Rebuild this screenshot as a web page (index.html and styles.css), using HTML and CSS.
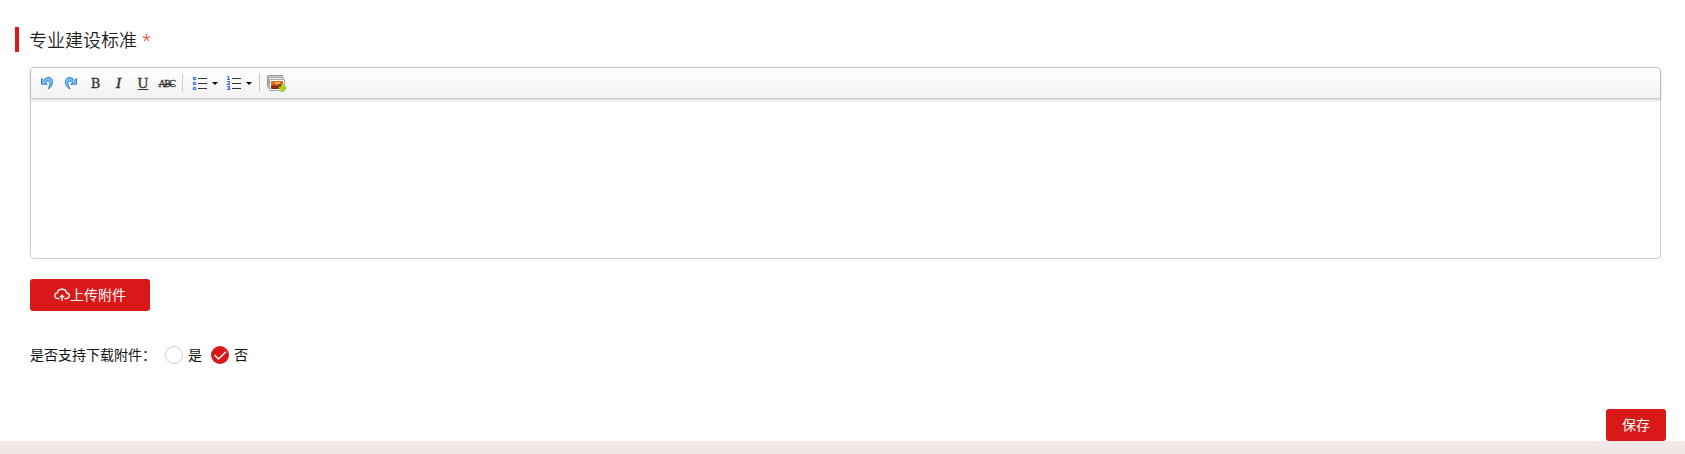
FILE: index.html
```html
<!DOCTYPE html>
<html lang="zh-CN">

<head>
  <meta charset="UTF-8" />
  <meta name="viewport" content="width=device-width, initial-scale=1.0" />
  <title>专业建设标准</title>
  <link rel="stylesheet" href="styles.css">
</head>

<body>
  <main class="panel">
    <!-- Section title -->
    <h2 class="title">专业建设标准<span class="required">*</span></h2>

    <!-- Rich text editor -->
    <div class="editor">
      <div class="toolbar">
        <span class="tool">
          <svg width="14" height="14" viewBox="0 0 14 14">
            <path d="M1.500 2.500v5.700h5.700L5.300 6.200C8 4 10.200 5 10 7.800 9.800 9.800 9 11.300 8 13c3-1.500 4.800-4.500 4.500-7.700C12.100 1 7.500 0 3.400 4.300z" fill="#7fbdf4" stroke="#2a7fd8" />
          </svg>
        </span>
        <span class="tool">
          <svg width="14" height="14" viewBox="0 0 14 14">
            <path d="M12.500 2.500v5.700H6.800l1.900-2C6 4 3.800 5 4 7.800c.2 2 1 3.500 2 5.200C3 11.500 1.200 8.500 1.500 5.300 1.900 1 6.500 0 10.600 4.300z" fill="#7fbdf4" stroke="#2a7fd8" />
          </svg>
        </span>
        <span class="tool bold">B</span>
        <span class="tool italic">I</span>
        <span class="tool underline">U</span>
        <span class="tool strike">ABC</span>
        <span class="separator"></span>
        <span class="tool list">
          <svg width="16" height="16" viewBox="0 0 16 16" fill="none">
            <g stroke="#3d72e8" stroke-width="1.200">
              <circle cx="2.500" cy="3.500" r="1.200" />
              <circle cx="2.500" cy="8.500" r="1.200" />
              <circle cx="2.500" cy="13.500" r="1.200" />
            </g>
            <path d="M6 3.500h9M6 8.500h9M6 13.500h9" stroke="#333" />
          </svg>
          <i class="caret"></i>
        </span>
        <span class="tool list">
          <svg width="16" height="16" viewBox="0 0 16 16" fill="none">
            <path d="M1.200 1.500h1.300v3M1 4.500h3M1 6.500h2.500v1.300L1.500 9.500H4M1 11.500h2.500v3H1M1.500 13h2" stroke="#3d72e8" stroke-width="1.200" />
            <path d="M6 3.500h9M6 8.500h9M6 13.500h9" stroke="#333" />
          </svg>
          <i class="caret"></i>
        </span>
        <span class="separator picture-separator"></span>
        <span class="tool picture">
          <svg width="20" height="18" viewBox="0 0 20 18">
            <path d="M.5 1.500h15v11H.5z" fill="#ccc" stroke="#999" />
            <path d="M1.500 3.500h15v11h-15z" fill="#eee" stroke="#aaa" />
            <path d="M2.500 5.500h15v11h-15z" fill="#fff" stroke="#aaa" />
            <path d="M4 7h12v8H4z" fill="#e06a18" />
            <path d="M4 12l3-1 3 1 3-2 3 1v4H4z" fill="#8c2c0a" />
            <path d="M8 8h5v2H8z" fill="#f9b040" />
            <path d="M14.300 10.500h2.400v2.300H19v2.400h-2.300v2.300h-2.400v-2.300H12v-2.400h2.300z" fill="#a4d818" stroke="#8cc414" stroke-width=".5" />
          </svg>
        </span>
      </div>
      <div class="content" contenteditable="true"></div>
    </div>

    <!-- Attachment upload -->
    <button class="btn upload" type="button">
      <svg width="16" height="16" viewBox="0 0 16 16" fill="none" stroke="#fff" stroke-width="1.300">
        <path d="M5.500 11.600H4C-.2 11.200-.2 6.400 3.300 5.900 4 1.300 11.500.8 12.600 5.900c3.700.5 3.700 5.300-.6 5.700h-1.500" />
        <path d="M8 14V8.500M5.800 10.400L8 8.200l2.200 2.200" />
      </svg>
      <span>上传附件</span>
    </button>

    <!-- Download option -->
    <div class="option-row">
      <span class="label">是否支持下载附件：</span>
      <span class="radio"></span>
      <span class="radio-text">是</span>
      <span class="radio checked">
        <svg width="18" height="18" viewBox="0 0 18 18" fill="none" stroke="#fff" stroke-width="1.500">
          <path d="M3.500 9l4 4L15 5.800" />
        </svg>
      </span>
      <span class="radio-text">否</span>
    </div>

    <div class="actions">
      <button class="btn save" type="button"><span>保存</span></button>
    </div>
  </main>
</body>

</html>
```
FILE: styles.css
```css
* {
  box-sizing: border-box;
}

body {
  margin: 0;
  height: 454px;
  overflow: hidden;
  background: #f2e6e6;
  color: #111;
  font-family: "Liberation Sans", "Noto Sans CJK SC", sans-serif;
  font-size: 14px;
}

.panel {
  height: 441px;
  padding: 27px 19px 0 15px;
  background: #fff;
}

/* Section title */
.title {
  display: flex;
  height: 25px;
  margin: 0;
  padding-left: 10px;
  border-left: 4px solid #d9181a;
  color: #222;
  font-family: "Noto Sans CJK SC", sans-serif;
  font-size: 18px;
  font-weight: 350;
  line-height: 24px;
}

.required {
  margin-left: 5px;
  color: #f00;
  font-family: "Open Sans", "Noto Sans", sans-serif;
  font-size: 17px;
  font-weight: 300;
  line-height: 25px;
}

/* Editor */
.editor {
  height: 192px;
  margin: 15px 5px 0 15px;
  border: 1px solid #ccc;
  border-radius: 4px;
}

.toolbar {
  display: flex;
  align-items: center;
  height: 31px;
  padding-left: 4px;
  border-bottom: 1px solid #ccc;
  border-radius: 4px 4px 0 0;
  background: linear-gradient(#fff, #f2f2f2);
  box-shadow: 0 1px 4px rgba(0, 0, 0, 0.2);
}

.tool {
  display: flex;
  align-items: center;
  justify-content: center;
  width: 24px;
  height: 20px;
  color: #333;
  font-family: "Liberation Serif", serif;
  font-size: 15px;
}

.tool svg {
  display: block;
}

.bold {
  padding: 1px 0 0 1px;
  font-family: "DejaVu Serif", serif;
  font-size: 13px;
  -webkit-text-stroke: 0.3px #333;
}

.italic {
  padding-right: 1px;
  font-style: italic;
  -webkit-text-stroke: 0.5px #333;
}

.underline {
  padding-top: 1px;
  text-decoration: underline;
  -webkit-text-stroke: 0.3px #333;
}

.strike {
  padding-right: 1px;
  font-size: 10px;
  letter-spacing: -1.5px;
  text-decoration: line-through;
  -webkit-text-stroke: 0.3px #333;
}

.separator {
  width: 1px;
  height: 18px;
  margin: 0 9px 0 3px;
  background: #ccc;
}

.picture-separator {
  margin: 0 7px 0 -1px;
}

.list {
  justify-content: flex-start;
  gap: 4px;
  width: 34px;
}

.caret {
  border: 3px solid transparent;
  border-top-color: #000;
  border-bottom: 0;
}

.picture {
  width: 20px;
}

.content {
  height: 159px;
  outline: none;
}

/* Buttons */
.btn {
  display: flex;
  align-items: center;
  justify-content: center;
  height: 32px;
  padding: 0;
  border: 0;
  border-radius: 3px;
  background: #d9181a;
  color: #fff;
  font-family: inherit;
  font-size: 14px;
}

.btn span {
  padding-bottom: 2px;
}

.upload {
  width: 120px;
  margin: 20px 0 0 15px;
}

.save {
  width: 60px;
}

.actions {
  display: flex;
  justify-content: flex-end;
  margin-top: 44px;
}

/* Radio options */
.option-row {
  display: flex;
  align-items: center;
  height: 20px;
  margin: 34px 0 0 15px;
}

.label {
  width: 135px;
  padding-bottom: 2px;
  white-space: nowrap;
}

.radio {
  width: 18px;
  height: 18px;
  border: 1px solid #ccc;
  border-radius: 50%;
}

.radio svg {
  display: block;
}

.checked {
  border: 0;
  background: #d9181a;
}

.radio-text {
  width: 23px;
  margin-left: 5px;
  padding-bottom: 2px;
}
```
